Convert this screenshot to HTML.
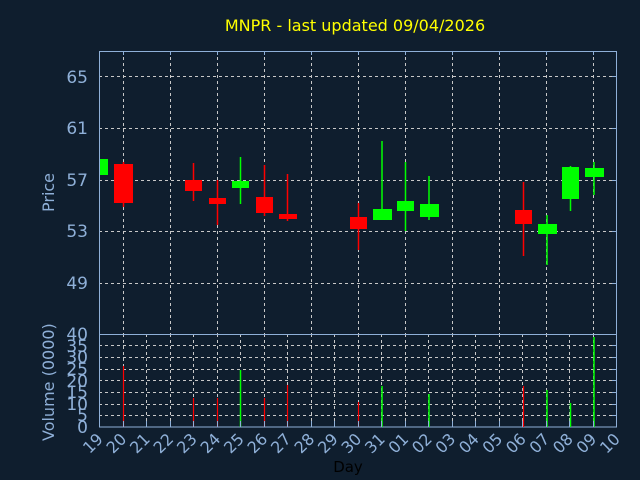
<!DOCTYPE html>
<html><head><meta charset="utf-8"><style>
html,body{margin:0;padding:0;background:#0f1e2e;}
svg{display:block;font-family:"DejaVu Sans","Liberation Sans",sans-serif;}
</style></head><body>
<svg width="640" height="480" viewBox="0 0 640 480" xmlns="http://www.w3.org/2000/svg">
<rect width="640" height="480" fill="#0f1e2e"/>
<text x="355" y="31" fill="#ffff00" font-size="16" text-anchor="middle">MNPR - last updated 09/04/2026</text>
<g stroke="#c8c8c8" stroke-width="1" stroke-dasharray="3,3" fill="none">
<path d="M99 76.5H616M99 128.5H616M99 180.5H616M99 231.5H616M99 283.5H616"/>
<path d="M123.5 51V334M170.5 51V334M217.5 51V334M264.5 51V334M311.5 51V334M358.5 51V334M405.5 51V334M452.5 51V334M499.5 51V334M546.5 51V334M593.5 51V334"/>
<path d="M99 415.5H616M99 404.5H616M99 392.5H616M99 380.5H616M99 369.5H616M99 357.5H616M99 345.5H616"/>
<path d="M123.5 334V427M146.5 334V427M170.5 334V427M193.5 334V427M217.5 334V427M240.5 334V427M264.5 334V427M287.5 334V427M311.5 334V427M334.5 334V427M358.5 334V427M381.5 334V427M405.5 334V427M428.5 334V427M452.5 334V427M475.5 334V427M499.5 334V427M522.5 334V427M546.5 334V427M569.5 334V427M593.5 334V427"/>
</g>
<g stroke="#8fb0d8" stroke-width="1" fill="none">
<rect x="99.5" y="51.5" width="517" height="375.5"/>
<path d="M99 334.5H617"/>
</g>
<!-- candles -->
<g stroke-width="1.5">
<path d="M193.5 163V201M217.5 180V225M264.5 165V216M287.5 174V221M358.5 203V250M123.5 162V207M523.5 182V256" stroke="#ff0000"/>
<path d="M240.5 157V204M382 141V219M405.5 162V231M429 176V220M547 215V265M570.5 166V211M594 162V195" stroke="#00ff00"/>
</g>
<g fill="#ff0000">
<rect x="114" y="164" width="19" height="39"/>
<rect x="185" y="180" width="17" height="11"/>
<rect x="209" y="198" width="17" height="6"/>
<rect x="256" y="197" width="17" height="16"/>
<rect x="279" y="214" width="18" height="5"/>
<rect x="350" y="217" width="17" height="12"/>
<rect x="515" y="210" width="17" height="14"/>
</g>
<g fill="#00ff00">
<rect x="100" y="159" width="8" height="16"/>
<rect x="232" y="181" width="17" height="7"/>
<rect x="373" y="209" width="19" height="11"/>
<rect x="397" y="201" width="17" height="10"/>
<rect x="420" y="204" width="19" height="13"/>
<rect x="538" y="224" width="19" height="10"/>
<rect x="562" y="167" width="17" height="32"/>
<rect x="585" y="168" width="19" height="9"/>
</g>
<!-- volume -->
<g stroke="#ff0000" stroke-width="1.2">
<path d="M123.5 366V427M193.5 398V427M217.5 398V427M264.5 398V427M287.5 385V427M358.5 402V427M523.5 386V427"/>
</g>
<g stroke="#00ff00" stroke-width="1.5">
<path d="M240.5 370V427M382 386V427M429 394V427M547 390V427M570.5 403V427M594 337V427"/>
</g>
<!-- ticks -->
<g stroke="#8fb0d8" stroke-width="1">
<path d="M123.5 51V55M170.5 51V55M217.5 51V55M264.5 51V55M311.5 51V55M358.5 51V55M405.5 51V55M452.5 51V55M499.5 51V55M546.5 51V55M593.5 51V55"/>
<path d="M123.5 427V421M146.5 427V421M170.5 427V421M193.5 427V421M217.5 427V421M240.5 427V421M264.5 427V421M287.5 427V421M311.5 427V421M334.5 427V421M358.5 427V421M381.5 427V421M405.5 427V421M428.5 427V421M452.5 427V421M475.5 427V421M499.5 427V421M522.5 427V421M546.5 427V421M569.5 427V421M593.5 427V421"/>
<path d="M612 76.5H616M612 128.5H616M612 180.5H616M612 231.5H616M612 283.5H616M612 415.5H616M612 404.5H616M612 392.5H616M612 380.5H616M612 369.5H616M612 357.5H616M612 345.5H616"/>
</g>
<g fill="#8fb0d8" font-size="17" text-anchor="end">
<text x="88" y="83">65</text>
<text x="88" y="134">61</text>
<text x="88" y="186">57</text>
<text x="88" y="237">53</text>
<text x="88" y="289">49</text>
<text x="88" y="340">40</text>
<text x="88" y="352">35</text>
<text x="88" y="363">30</text>
<text x="88" y="375">25</text>
<text x="88" y="387">20</text>
<text x="88" y="398">15</text>
<text x="88" y="410">10</text>
<text x="88" y="421">5</text>
<text x="88" y="433">0</text>
</g>
<g fill="#8fb0d8" font-size="16">
<text transform="translate(54,212) rotate(-90)">Price</text>
<text transform="translate(54,441) rotate(-90)">Volume (0000)</text>
</g>
<g fill="#8fb0d8" font-size="16" text-anchor="end">
<text transform="translate(104,440) rotate(-45)">19</text>
<text transform="translate(127.5,440) rotate(-45)">20</text>
<text transform="translate(151,440) rotate(-45)">21</text>
<text transform="translate(174.5,440) rotate(-45)">22</text>
<text transform="translate(198,440) rotate(-45)">23</text>
<text transform="translate(221.5,440) rotate(-45)">24</text>
<text transform="translate(245,440) rotate(-45)">25</text>
<text transform="translate(268.5,440) rotate(-45)">26</text>
<text transform="translate(292,440) rotate(-45)">27</text>
<text transform="translate(315.5,440) rotate(-45)">28</text>
<text transform="translate(339,440) rotate(-45)">29</text>
<text transform="translate(362.5,440) rotate(-45)">30</text>
<text transform="translate(386,440) rotate(-45)">31</text>
<text transform="translate(409.5,440) rotate(-45)">01</text>
<text transform="translate(433,440) rotate(-45)">02</text>
<text transform="translate(456.5,440) rotate(-45)">03</text>
<text transform="translate(480,440) rotate(-45)">04</text>
<text transform="translate(503.5,440) rotate(-45)">05</text>
<text transform="translate(527,440) rotate(-45)">06</text>
<text transform="translate(550.5,440) rotate(-45)">07</text>
<text transform="translate(574,440) rotate(-45)">08</text>
<text transform="translate(597.5,440) rotate(-45)">09</text>
<text transform="translate(621,440) rotate(-45)">10</text>
</g>
<text x="348" y="472" fill="#000000" font-size="15" text-anchor="middle">Day</text>
</svg>
</body></html>
